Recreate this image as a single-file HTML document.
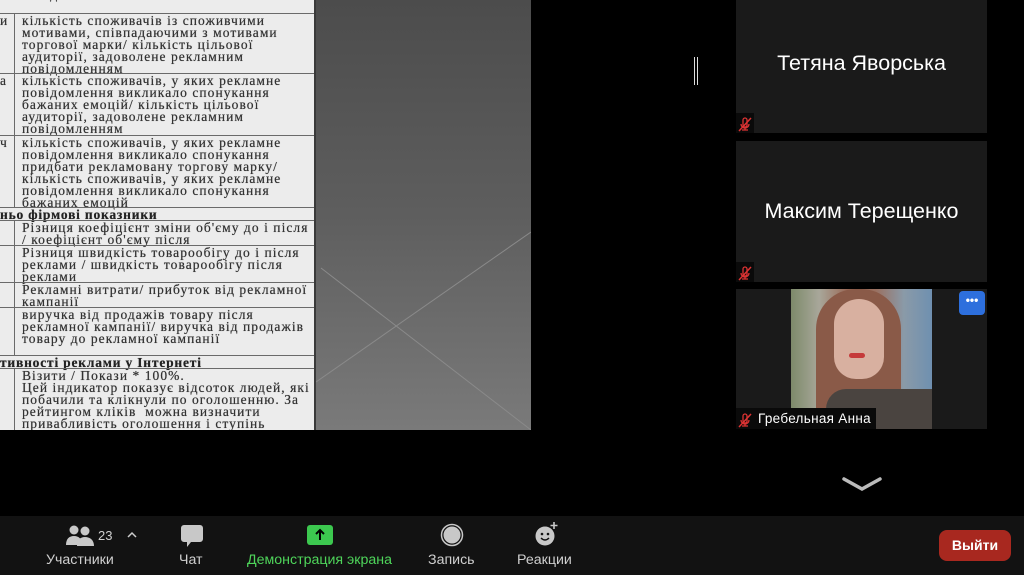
<!DOCTYPE html>
<html><head><meta charset="utf-8"><style>
*{margin:0;padding:0;box-sizing:border-box}
body{width:1024px;height:575px;background:#000;overflow:hidden;position:relative;font-family:"Liberation Sans",sans-serif}
.doc{position:absolute;left:0;top:0;width:316px;height:430px;background:#ececec;border-right:2px solid #3a3a3a;font-family:"Liberation Serif",serif;font-size:13.5px;line-height:12px;color:#333;letter-spacing:1.05px;overflow:hidden;text-shadow:0 0 .5px #333}
.r{position:absolute;left:0;width:316px;border-top:1px solid #6a6a6a}
.r .t{position:absolute;left:22px;top:1px;white-space:nowrap}
.r .l{position:absolute;left:0;top:1px}
.vl{position:absolute;left:14px;top:0;bottom:0;border-left:1px solid #6a6a6a}
.h{font-weight:bold;color:#222;letter-spacing:.8px}
.gray{position:absolute;left:316px;top:0;width:215px;height:430px;background:linear-gradient(#4c4c4c,#5e5e5e 50%,#7a7a7a)}
.tile{position:absolute;left:736px;width:251px;background:#1a1a1a}
.name{position:absolute;width:100%;text-align:center;color:#fff;font-size:21.5px}
.mic{position:absolute;left:0;bottom:0;width:18px;height:20px;background:#0a0a0a}
.bar{position:absolute;left:0;top:516px;width:1024px;height:59px;background:#121212}
.lbl{position:absolute;top:552px;font-size:14.2px;color:#cfcfcf;white-space:nowrap}
</style></head><body>
<div class="doc">
<div class="vl" style="top:13px;height:194px"></div>
<div class="vl" style="top:220px;height:135px"></div>
<div class="vl" style="top:368px;height:62px"></div>
<div class="r" style="top:-12px;border:none"><div class="t">повідомлення</div></div>
<div class="r" style="top:13px"><div class="l">и</div><div class="t">кількість споживачів із споживчими<br>мотивами, співпадаючими з мотивами<br>торгової марки/ кількість цільової<br>аудиторії, задоволене рекламним<br>повідомленням</div></div>
<div class="r" style="top:73px"><div class="l">а</div><div class="t">кількість споживачів, у яких рекламне<br>повідомлення викликало спонукання<br>бажаних емоцій/ кількість цільової<br>аудиторії, задоволене рекламним<br>повідомленням</div></div>
<div class="r" style="top:135px"><div class="l">ч</div><div class="t">кількість споживачів, у яких рекламне<br>повідомлення викликало спонукання<br>придбати рекламовану торгову марку/<br>кількість споживачів, у яких рекламне<br>повідомлення викликало спонукання<br>бажаних емоцій</div></div>
<div class="r h" style="top:207px"><div class="l">ньо фірмові показники</div></div>
<div class="r" style="top:220px"><div class="t">Різниця коефіцієнт зміни об'єму до і після<br>/ коефіцієнт об'єму після</div></div>
<div class="r" style="top:245px"><div class="t">Різниця швидкість товарообігу до і після<br>реклами / швидкість товарообігу після<br>реклами</div></div>
<div class="r" style="top:282px"><div class="t">Рекламні витрати/ прибуток від рекламної<br>кампанії</div></div>
<div class="r" style="top:307px"><div class="t">виручка від продажів товару після<br>рекламної кампанії/ виручка від продажів<br>товару до рекламної кампанії</div></div>
<div class="r h" style="top:355px"><div class="l">тивності реклами у Інтернеті</div></div>
<div class="r" style="top:368px"><div class="t">Візити / Покази * 100%.<br>Цей індикатор показує відсоток людей, які<br>побачили та клікнули по оголошенню. За<br>рейтингом кліків&nbsp; можна визначити<br>привабливість оголошення і ступінь</div></div>
</div>
<div class="gray"><svg width="215" height="430" style="position:absolute;left:0;top:0"><line x1="0" y1="382" x2="215" y2="232" stroke="#8a8a8a" stroke-width="1"/><line x1="5" y1="268" x2="215" y2="430" stroke="#8a8a8a" stroke-width="1"/></svg></div>
<div style="position:absolute;left:694px;top:57px;width:1px;height:28px;background:#ddd"></div>
<div style="position:absolute;left:697px;top:57px;width:1px;height:28px;background:#ddd"></div>

<div class="tile" style="top:0;height:133px"><div class="name" style="top:51px">Тетяна Яворська</div><div class="mic" style="top:113px"><svg width="18" height="20"><path d="M7 7v5a2 2 0 0 0 4 0V7a2 2 0 0 0-4 0M5 11a4 4 0 0 0 8 0M9 15v2M6 17h6" stroke="#d33" fill="none" stroke-width="1.3"/><line x1="3" y1="18" x2="15" y2="5" stroke="#d33" stroke-width="1.5"/></svg></div></div>
<div class="tile" style="top:141px;height:141px"><div class="name" style="top:58px">Максим Терещенко</div><div class="mic" style="top:121px"><svg width="18" height="20"><path d="M7 7v5a2 2 0 0 0 4 0V7a2 2 0 0 0-4 0M5 11a4 4 0 0 0 8 0M9 15v2M6 17h6" stroke="#d33" fill="none" stroke-width="1.3"/><line x1="3" y1="18" x2="15" y2="5" stroke="#d33" stroke-width="1.5"/></svg></div></div>
<div class="tile" style="top:289px;height:140px">
<div style="position:absolute;left:55px;top:0;width:141px;height:140px;background:linear-gradient(90deg,#7d8a6a 0%,#a8a79a 20%,#9a6a58 40%,#9a7060 60%,#8a9aa8 80%,#6f90b0 100%)"></div>
<div style="position:absolute;left:80px;top:0;width:85px;height:140px;border-radius:40px 40px 0 0;background:#8a5a48"></div>
<div style="position:absolute;left:98px;top:10px;width:50px;height:80px;border-radius:25px 25px 22px 22px;background:#d8b0a0"></div>
<div style="position:absolute;left:113px;top:64px;width:16px;height:5px;border-radius:3px;background:#c53a3a"></div>
<div style="position:absolute;left:90px;top:100px;width:106px;height:40px;background:#4a4440;border-radius:20px 0 0 0"></div>
<div style="position:absolute;right:2px;top:2px;width:26px;height:24px;border-radius:4px;background:#2d6fdd;color:#fff;font-size:12px;text-align:center;line-height:18px;font-weight:bold">•••</div>
<div style="position:absolute;left:0;top:119px;width:140px;height:21px;background:#0a0a0a;color:#fff;font-size:13.5px;line-height:21px;padding-left:22px;letter-spacing:.3px">Гребельная Анна</div>
<div class="mic" style="top:120px;background:transparent"><svg width="18" height="20"><path d="M7 7v5a2 2 0 0 0 4 0V7a2 2 0 0 0-4 0M5 11a4 4 0 0 0 8 0M9 15v2M6 17h6" stroke="#d33" fill="none" stroke-width="1.3"/><line x1="3" y1="18" x2="15" y2="5" stroke="#d33" stroke-width="1.5"/></svg></div>
</div>
<svg style="position:absolute;left:840px;top:472px" width="44" height="24"><path d="M4 7l18 10 18-10" stroke="#bbb" stroke-width="3.5" fill="none" stroke-linecap="round"/></svg>

<div class="bar"></div>
<svg style="position:absolute;left:66px;top:525px" width="30" height="22"><circle cx="8" cy="5" r="4.5" fill="#c8c8c8"/><circle cx="19" cy="6" r="4.5" fill="#c8c8c8"/><path d="M0 20c0-6 3-9 8-9s8 3 8 9z" fill="#c8c8c8"/><path d="M11 21c0-6 3-9 8-9s9 3 9 9z" fill="#c8c8c8"/></svg>
<div style="position:absolute;left:98px;top:528px;font-size:13px;color:#cfcfcf">23</div>
<svg style="position:absolute;left:127px;top:531px" width="10" height="8"><path d="M1 6l4-4 4 4" stroke="#ccc" stroke-width="1.5" fill="none"/></svg>
<div class="lbl" style="left:46px">Участники</div>
<svg style="position:absolute;left:180px;top:524px" width="24" height="24"><path d="M4 1h16a3 3 0 0 1 3 3v11a3 3 0 0 1-3 3h-9l-4 5v-5H4a3 3 0 0 1-3-3V4a3 3 0 0 1 3-3z" fill="#c8c8c8"/></svg>
<div class="lbl" style="left:179px">Чат</div>
<div style="position:absolute;left:307px;top:525px;width:26px;height:20px;background:#3cc84f;border-radius:3px"><svg width="26" height="20"><path d="M13 15V6M9 9l4-4 4 4" stroke="#000" stroke-width="2" fill="none"/></svg></div>
<div class="lbl" style="left:247px;color:#4ed45a">Демонстрация экрана</div>
<svg style="position:absolute;left:440px;top:523px" width="24" height="24"><circle cx="12" cy="12" r="10.5" fill="none" stroke="#c8c8c8" stroke-width="1.5"/><circle cx="12" cy="12" r="8.5" fill="#c8c8c8"/></svg>
<div class="lbl" style="left:428px">Запись</div>
<svg style="position:absolute;left:533px;top:521px" width="26" height="26"><circle cx="12" cy="15" r="9.5" fill="#c8c8c8"/><circle cx="9" cy="13" r="1.3" fill="#121212"/><circle cx="15" cy="13" r="1.3" fill="#121212"/><path d="M8 17q4 4 8 0" stroke="#121212" stroke-width="1.4" fill="none"/><path d="M21 1v7M17.5 4.5h7" stroke="#c8c8c8" stroke-width="1.6"/></svg>
<div class="lbl" style="left:517px">Реакции</div>
<div style="position:absolute;left:939px;top:530px;width:72px;height:31px;background:#a8281f;border-radius:8px;color:#fff;font-weight:bold;font-size:14px;text-align:center;line-height:31px">Выйти</div>
</body></html>
